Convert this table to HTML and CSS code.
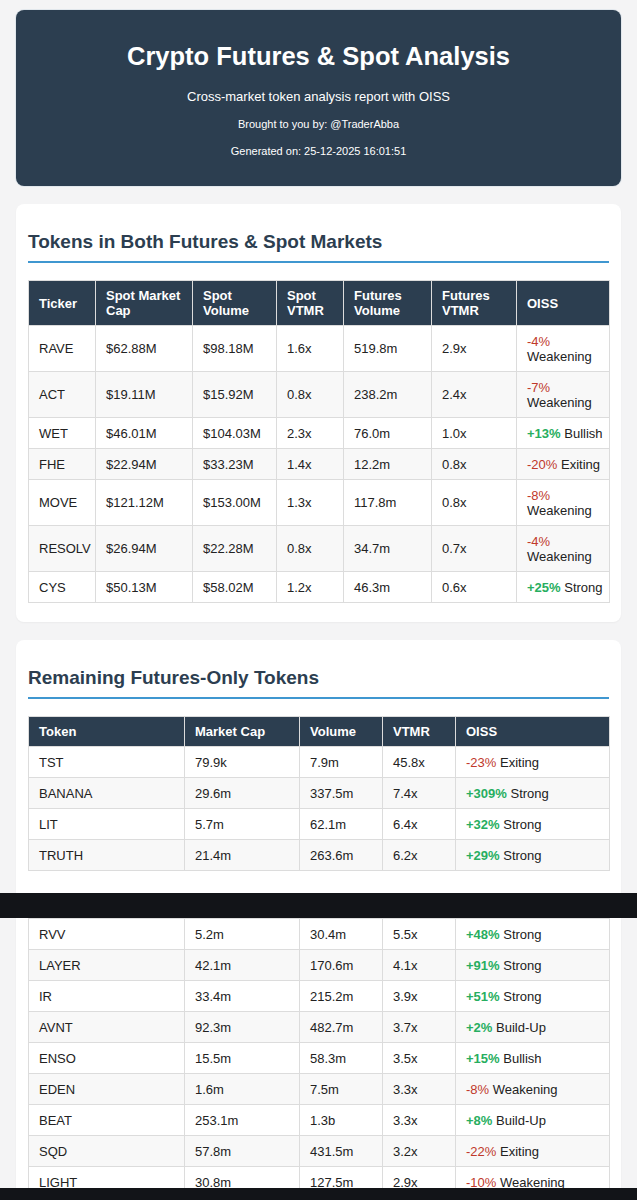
FILE: index.html
```html
<!DOCTYPE html>
<html lang="en">
<head>
<meta charset="utf-8">
<title>Crypto Futures &amp; Spot Analysis</title>
<link rel="stylesheet" href="styles.css">
</head>
<body>
<div class="page">
  <header class="hero">
    <h1 class="hero-title">Crypto Futures &amp; Spot Analysis</h1>
    <p class="hero-sub">Cross-market token analysis report with OISS</p>
    <p class="hero-meta">Brought to you by: @TraderAbba</p>
    <p class="hero-meta">Generated on: 25-12-2025 16:01:51</p>
  </header>

  <section class="card card-both">
    <h2 class="card-title">Tokens in Both Futures &amp; Spot Markets</h2>
    <table class="data t-both">
      <colgroup>
        <col class="c67"><col class="c97"><col class="c84"><col class="c67"><col class="c88"><col class="c85"><col class="c93">
      </colgroup>
      <thead>
        <tr><th>Ticker</th><th>Spot Market Cap</th><th>Spot Volume</th><th>Spot VTMR</th><th>Futures Volume</th><th>Futures VTMR</th><th class="oiss">OISS</th></tr>
      </thead>
      <tbody>
        <tr><td>RAVE</td><td>$62.88M</td><td>$98.18M</td><td>1.6x</td><td>519.8m</td><td>2.9x</td><td class="oiss"><span class="neg">-4%</span> Weakening</td></tr>
        <tr><td>ACT</td><td>$19.11M</td><td>$15.92M</td><td>0.8x</td><td>238.2m</td><td>2.4x</td><td class="oiss"><span class="neg">-7%</span> Weakening</td></tr>
        <tr><td>WET</td><td>$46.01M</td><td>$104.03M</td><td>2.3x</td><td>76.0m</td><td>1.0x</td><td class="oiss"><span class="pos">+13%</span> Bullish</td></tr>
        <tr><td>FHE</td><td>$22.94M</td><td>$33.23M</td><td>1.4x</td><td>12.2m</td><td>0.8x</td><td class="oiss"><span class="neg">-20%</span> Exiting</td></tr>
        <tr><td>MOVE</td><td>$121.12M</td><td>$153.00M</td><td>1.3x</td><td>117.8m</td><td>0.8x</td><td class="oiss"><span class="neg">-8%</span> Weakening</td></tr>
        <tr><td>RESOLV</td><td>$26.94M</td><td>$22.28M</td><td>0.8x</td><td>34.7m</td><td>0.7x</td><td class="oiss"><span class="neg">-4%</span> Weakening</td></tr>
        <tr><td>CYS</td><td>$50.13M</td><td>$58.02M</td><td>1.2x</td><td>46.3m</td><td>0.6x</td><td class="oiss"><span class="pos">+25%</span> Strong</td></tr>
      </tbody>
    </table>
  </section>

  <section class="card card-futures">
    <h2 class="card-title">Remaining Futures-Only Tokens</h2>
    <table class="data t-fut">
      <colgroup>
        <col class="c156"><col class="c115"><col class="c83"><col class="c73"><col class="c154">
      </colgroup>
      <thead>
        <tr><th>Token</th><th>Market Cap</th><th>Volume</th><th>VTMR</th><th>OISS</th></tr>
      </thead>
      <tbody>
        <tr><td>TST</td><td>79.9k</td><td>7.9m</td><td>45.8x</td><td><span class="neg">-23%</span> Exiting</td></tr>
        <tr><td>BANANA</td><td>29.6m</td><td>337.5m</td><td>7.4x</td><td><span class="pos">+309%</span> Strong</td></tr>
        <tr><td>LIT</td><td>5.7m</td><td>62.1m</td><td>6.4x</td><td><span class="pos">+32%</span> Strong</td></tr>
        <tr><td>TRUTH</td><td>21.4m</td><td>263.6m</td><td>6.2x</td><td><span class="pos">+29%</span> Strong</td></tr>
      </tbody>
    </table>
  </section>
</div>

<div class="band band-mid"></div>

<div class="page page-cont">
  <div class="card card-cont">
    <table class="data t-fut">
      <colgroup>
        <col class="c156"><col class="c115"><col class="c83"><col class="c73"><col class="c154">
      </colgroup>
      <tbody>
        <tr><td>RVV</td><td>5.2m</td><td>30.4m</td><td>5.5x</td><td><span class="pos">+48%</span> Strong</td></tr>
        <tr><td>LAYER</td><td>42.1m</td><td>170.6m</td><td>4.1x</td><td><span class="pos">+91%</span> Strong</td></tr>
        <tr><td>IR</td><td>33.4m</td><td>215.2m</td><td>3.9x</td><td><span class="pos">+51%</span> Strong</td></tr>
        <tr><td>AVNT</td><td>92.3m</td><td>482.7m</td><td>3.7x</td><td><span class="pos">+2%</span> Build-Up</td></tr>
        <tr><td>ENSO</td><td>15.5m</td><td>58.3m</td><td>3.5x</td><td><span class="pos">+15%</span> Bullish</td></tr>
        <tr><td>EDEN</td><td>1.6m</td><td>7.5m</td><td>3.3x</td><td><span class="neg">-8%</span> Weakening</td></tr>
        <tr><td>BEAT</td><td>253.1m</td><td>1.3b</td><td>3.3x</td><td><span class="pos">+8%</span> Build-Up</td></tr>
        <tr><td>SQD</td><td>57.8m</td><td>431.5m</td><td>3.2x</td><td><span class="neg">-22%</span> Exiting</td></tr>
        <tr><td>LIGHT</td><td>30.8m</td><td>127.5m</td><td>2.9x</td><td><span class="neg">-10%</span> Weakening</td></tr>
      </tbody>
    </table>
  </div>
</div>

<div class="band band-bottom"></div>
</body>
</html>
```

FILE: styles.css
```css
* { box-sizing: border-box; }

html, body {
  margin: 0;
  padding: 0;
  background: #f4f4f5;
  font-family: "Liberation Sans", Arial, sans-serif;
  color: #222;
}

body { overflow: hidden; height: 1200px; }

.page {
  padding: 10px 16px 0;
}

.page-cont { padding-top: 0; }

/* Hero */
.hero {
  background: #2c3e50;
  color: #fff;
  border-radius: 8px;
  text-align: center;
  padding: 31.5px 20px 28.5px;
  box-shadow: 0 0 0 1px rgba(190, 205, 220, 0.35);
}

.hero-title {
  margin: 0 0 18px;
  font-size: 25.5px;
  line-height: 29px;
  font-weight: bold;
}

.hero-sub {
  margin: 0 0 14px;
  font-size: 13px;
  line-height: 15px;
}

.hero-meta {
  margin: 0 0 14px;
  font-size: 11px;
  line-height: 13px;
}

.hero-meta:last-child { margin-bottom: 0; }

/* Cards */
.card {
  background: #fff;
  border-radius: 8px;
  margin-top: 18px;
  padding: 27px 12px 19px;
  box-shadow: 0 1px 2px rgba(0, 0, 0, 0.04);
}

.card-futures {
  padding-bottom: 0;
  height: 253px;
  border-radius: 8px 8px 0 0;
}

.card-cont {
  margin-top: 0;
  padding: 0 12px;
  height: 270px;
  overflow: hidden;
  border-radius: 0;
}

.card-title {
  margin: 0 0 17px;
  font-size: 19px;
  line-height: 22px;
  font-weight: bold;
  color: #2c3e50;
  padding-bottom: 8px;
  border-bottom: 2px solid #3f97d0;
}

/* Tables */
.data {
  width: 581px;
  border-collapse: collapse;
  table-layout: fixed;
  font-size: 13px;
  line-height: 15px;
  color: #222;
}

.data th {
  background: #2c3e50;
  color: #fff;
  font-weight: bold;
  text-align: left;
  vertical-align: middle;
  padding: 7px 6px 7px 10px;
  border: 1px solid #dcdcdc;
}

.data td {
  padding: 7.5px 6px 7.5px 10px;
  border: 1px solid #dcdcdc;
  vertical-align: middle;
}

.data .oiss { padding-right: 3px; }

.data tbody tr:nth-child(even) td { background: #f8f8f8; }

.neg { color: #c0392b; }
.pos { color: #27ae60; font-weight: bold; }

.c67 { width: 67px; }
.c97 { width: 97px; }
.c84 { width: 84px; }
.c88 { width: 88px; }
.c85 { width: 85px; }
.c93 { width: 93px; }
.c156 { width: 156px; }
.c115 { width: 115px; }
.c83 { width: 83px; }
.c73 { width: 73px; }
.c154 { width: 154px; }

/* Screenshot seams */
.band {
  background: #121418;
}

.band-mid { height: 25px; }
.band-bottom { height: 12px; }
```
